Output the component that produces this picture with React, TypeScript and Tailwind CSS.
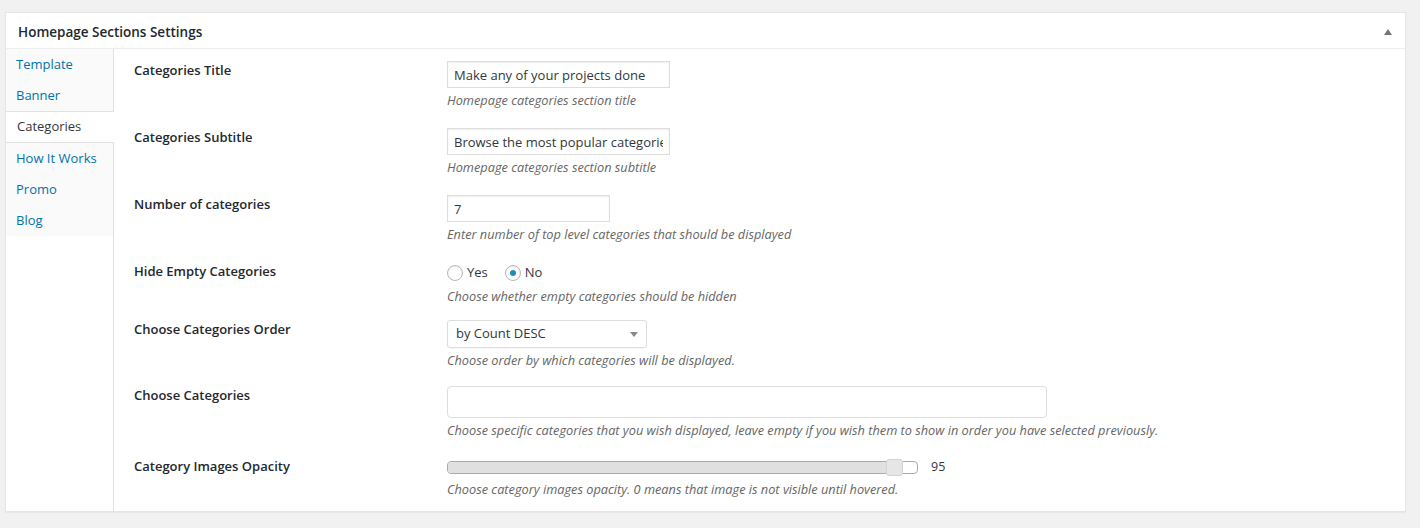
import { useState } from "react";

const tabs = ["Template", "Banner", "Categories", "How It Works", "Promo", "Blog"];

const inputCls =
  "h-[27px] border border-[#ddd] bg-white px-[6px] text-[13px] text-[#32373c] shadow-[inset_0_1px_2px_rgba(0,0,0,0.07)] focus:outline-none";

const Row = ({ label, pt, children }: any) => {
  return (
    <div className={`flex ${pt}`}>
      <div className="w-[313px] shrink-0 text-[13px] font-[600] leading-[18px] text-[#23282d]">{label}</div>
      <div className="flex flex-col">{children}</div>
    </div>
  );
};

const Desc = ({ text }: any) => (
  <p className="mt-[3px] text-[12.75px] italic leading-[18px] text-[#666]">{text}</p>
);

export default function App() {
  const [hideEmpty, setHideEmpty] = useState("no");
  const [opacity, setOpacity] = useState(95);

  return (
    <div className="min-h-[528px] bg-[#f1f1f1] pl-[5px] pr-[14px] pt-[12px] font-['Open_Sans',sans-serif] text-[#444]">
      <div className="border border-[#e5e5e5] bg-white shadow-[0_1px_1px_rgba(0,0,0,0.04)]">
        {/* header */}
        <div className="flex h-[36px] items-center justify-between border-b border-[#eee] pl-[12px] pr-[13px] pt-[3px]">
          <h2 className="text-[13.5px] font-[600] text-[#23282d]">Homepage Sections Settings</h2>
          <span className="h-0 w-0 border-x-[4px] border-b-[6px] border-x-transparent border-b-[#72777c]" />
        </div>
        <div className="flex">
          {/* tabs */}
          <div className="w-[108px] shrink-0 border-r border-[#e1e1e1]">
            <ul className="bg-[#fafafa]">
              {tabs.map((t) => (
                <li
                  key={t}
                  className={
                    t === "Categories"
                      ? "-mr-px h-[32px] border-y border-[#e1e1e1] bg-white pl-[11px] text-[13px] leading-[29px] text-[#32373c]"
                      : "h-[31px] pl-[10px] text-[13px] leading-[30px] text-[#0073aa]"
                  }
                >
                  {t}
                </li>
              ))}
            </ul>
          </div>
          {/* fields */}
          <div className="flex-1 pb-[13px] pl-[20px]">
            <Row label="Categories Title" pt="pt-[12px]">
              <input className={`${inputCls} w-[223px]`} defaultValue="Make any of your projects done" />
              <Desc text="Homepage categories section title" />
            </Row>
            <Row label="Categories Subtitle" pt="pt-[19px]">
              <input className={`${inputCls} w-[223px]`} defaultValue="Browse the most popular categories" />
              <Desc text="Homepage categories section subtitle" />
            </Row>
            <Row label="Number of categories" pt="pt-[19px]">
              <input className={`${inputCls} w-[163px]`} defaultValue="7" />
              <Desc text="Enter number of top level categories that should be displayed" />
            </Row>
            <Row label="Hide Empty Categories" pt="pt-[19px]">
              <div className="flex h-[22px] items-center gap-[17px] text-[13px] text-[#32373c]">
                {[
                  ["yes", "Yes"],
                  ["no", "No"],
                ].map(([v, l]) => (
                  <label key={v} className="flex items-center gap-[4px]" onClick={() => setHideEmpty(v)}>
                    <span className="flex h-[16px] w-[16px] items-center justify-center rounded-full border border-[#b4b9be] bg-white shadow-[inset_0_1px_2px_rgba(0,0,0,0.1)]">
                      {hideEmpty === v && <span className="h-[6px] w-[6px] rounded-full bg-[#1e8cbe]" />}
                    </span>
                    {l}
                  </label>
                ))}
              </div>
              <Desc text="Choose whether empty categories should be hidden" />
            </Row>
            <Row label="Choose Categories Order" pt="pt-[15px]">
              <div className="flex h-[28px] w-[200px] items-center justify-between rounded-[3px] border border-[#ddd] bg-white pl-[8px] pr-[8px] text-[13px] text-[#32373c] shadow-[0_1px_1px_rgba(0,0,0,0.04)]">
                <span>by Count DESC</span>
                <span className="h-0 w-0 border-x-[4px] border-t-[5px] border-x-transparent border-t-[#888]" />
              </div>
              <Desc text="Choose order by which categories will be displayed." />
            </Row>
            <Row label="Choose Categories" pt="pt-[17px]">
              <div className="h-[32px] w-[600px] rounded-[4px] border border-[#ddd] bg-white" />
              <Desc text="Choose specific categories that you wish displayed, leave empty if you wish them to show in order you have selected previously." />
            </Row>
            <Row label="Category Images Opacity" pt="pt-[18px]">
              <div className="flex h-[20px] items-center">
                <div className="relative h-[13px] w-[471px] rounded-[4px] border border-[#aaa] bg-white">
                  <div className="h-full rounded-l-[4px] bg-[#e0e0e0]" style={{ width: `${opacity}%` }} />
                  <span
                    onClick={() => setOpacity(opacity)}
                    className="absolute top-[-3px] h-[17px] w-[17px] rounded-[3px] border border-[#d3d3d3] bg-[#e6e6e6]"
                    style={{ left: `calc(${opacity}% - 8px)` }}
                  />
                </div>
                <span className="ml-[13px] text-[12.5px] text-[#32373c]">{opacity}</span>
              </div>
              <Desc text="Choose category images opacity. 0 means that image is not visible until hovered." />
            </Row>
          </div>
        </div>
      </div>
    </div>
  );
}
